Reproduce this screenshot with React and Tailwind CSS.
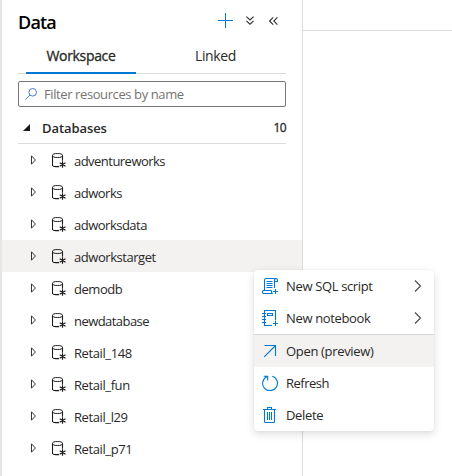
import React from "react";

const databases = [
  { name: "adventureworks", track: "tracking-[-0.53px]" },
  { name: "adworks", track: "tracking-[-0.5px]" },
  { name: "adworksdata", track: "tracking-[-0.5px]" },
  { name: "adworkstarget", track: "tracking-[-0.45px]", selected: true },
  { name: "demodb", track: "tracking-[-0.45px]" },
  { name: "newdatabase", track: "tracking-[-0.55px]" },
  { name: "Retail_148", track: "tracking-[-0.4px]" },
  { name: "Retail_fun", track: "tracking-[-0.4px]" },
  { name: "Retail_l29", track: "tracking-[-0.4px]" },
  { name: "Retail_p71", track: "tracking-[-0.4px]" },
];

function DatabaseIcon() {
  return (
    <svg className="h-4 w-4 shrink-0" viewBox="0 0 16 16" fill="none" stroke="#1b1a19">
      <path d="M.5 3.5c0-1.2 1.5-2 5-2s5 .8 5 2-1.5 2-5 2-5-.8-5-2z" />
      <path d="M.5 3.5v9.7c0 .9 1.3 1.4 3.2 1.4h3.3M10.5 3.5v5.2" strokeWidth="1.1" />
      <path d="M10.5 9.2v6.6M7.7 10.8l5.8 3.4M13.5 10.8l-5.8 3.4" strokeWidth="1.2" />
    </svg>
  );
}

function ScriptIcon() {
  return (
    <svg className="h-4 w-4" viewBox="0 0 16 16" fill="none" stroke="#0078d4" strokeWidth="1.1">
      <path d="M2.5 12.3V2.5c0-1.2.7-2 2-2h9c1.2 0 2 .8 2 2v1h-3M12.5 10V2.5c0-1.2.5-2 1.4-2M9.5 12.5h-8c-.7 0-1 .5-1 1.4 0 1 .5 1.6 1.4 1.6h8.6M9.5 12.5v1.3c0 1 .4 1.7 1.3 1.7" />
      <path d="M4.5 3.5h6M4.5 5.5h6M4.5 7.5h6M4.5 9.5h6M13.5 11v5M11 13.5h5" />
    </svg>
  );
}

function NotebookIcon() {
  return (
    <svg className="h-4 w-4" viewBox="0 0 16 16" fill="none" stroke="#0078d4" strokeWidth="1.1">
      <path d="M10 15.5H2.5V.5h11v10M5.5 3.5h5v2h-5zM0 3.5h4M0 6.5h4M0 9.5h4M0 12.5h4M13.5 11v5M11 13.5h5" />
    </svg>
  );
}

function OpenIcon() {
  return (
    <svg className="h-4 w-4" viewBox="0 0 16 16" fill="none" stroke="#0078d4" strokeWidth="1.1">
      <path d="M2.5 2.5h11V13M13.5 2.5L2.2 13.8" />
    </svg>
  );
}

function RefreshIcon() {
  return (
    <svg className="h-4 w-4" viewBox="0 0 16 16" fill="none" stroke="#0078d4" strokeWidth="1.1">
      <path d="M10.3 1.2A7.4 7.4 0 1 1 5 1.5M1.7 1.2h4v4.3" />
    </svg>
  );
}

function DeleteIcon() {
  return (
    <svg className="h-4 w-4" viewBox="0 0 16 16" fill="none" stroke="#0078d4" strokeWidth="1.1">
      <path d="M1 2.5h13M5.5 2.5v-2h4v2M2.5 2.5v12c0 .6.4 1 1 1h8c.6 0 1-.4 1-1v-12M5.5 5v8M7.5 5v8M9.5 5v8" />
    </svg>
  );
}

const menu = [
  { label: "New SQL script", Icon: ScriptIcon, sub: true, track: "tracking-[-0.35px]" },
  { label: "New notebook", Icon: NotebookIcon, sub: true, track: "tracking-[-0.35px]" },
  { label: "Open (preview)", Icon: OpenIcon, active: true, track: "tracking-[-0.33px]" },
  { label: "Refresh", Icon: RefreshIcon, track: "tracking-[-0.5px]" },
  { label: "Delete", Icon: DeleteIcon, track: "tracking-[-0.35px]" },
];

function ContextMenu() {
  return (
    <div className="absolute left-[254px] top-[270px] w-[180px] overflow-hidden rounded bg-white shadow-[0_3px_8px_rgba(0,0,0,0.14),0_0_2px_rgba(0,0,0,0.06)]">
      {menu.map(({ label, Icon, sub, active, track }) => (
        <div
          key={label}
          className={`flex items-center pl-2 pr-3 ${active ? "h-[33px] border-t border-[#d6d6d6] bg-[#f3f2f1]" : "h-8"}`}
        >
          <Icon />
          <span className={`ml-2 text-[13px] leading-4 ${track}`}>{label}</span>
          {sub && (
            <svg className="ml-auto h-3 w-2" viewBox="0 0 8 12" fill="none" stroke="#484644" strokeWidth="1.1">
              <path d="M1 .5L6.5 6 1 11.5" />
            </svg>
          )}
        </div>
      ))}
    </div>
  );
}

export default function App() {
  return (
    <div className="relative flex h-[476px] w-[452px] overflow-hidden bg-white font-['Open_Sans','Noto_Sans',sans-serif] text-[13px] leading-4 text-[#292827]">
      <aside className="w-[303px] shrink-0 border-l-2 border-r border-l-[#e6e6e6] border-r-[#dcdcdc]">
        <header className="flex h-[41px] items-center pl-4 pr-6">
          <h1 className="mt-0.5 text-[18px] font-semibold leading-6 tracking-[-0.8px] text-black">Data</h1>
          <div className="ml-auto flex items-center">
            <svg className="h-[15px] w-[15px]" viewBox="0 0 15 15" stroke="#0078d4">
              <path d="M7.5 0v15M0 7.5h15" />
            </svg>
            <svg className="ml-[13px] h-[9px] w-2" viewBox="0 0 8 9" fill="none" stroke="#323130" strokeWidth="1.1">
              <path d="M.4.6L4 4 7.6.6M.4 4.8L4 8.2l3.6-3.4" />
            </svg>
            <svg className="ml-[15px] h-2 w-[9px]" viewBox="0 0 9 8" fill="none" stroke="#323130" strokeWidth="1.1">
              <path d="M4.2.4L.6 4l3.6 3.6M8.4.4L4.8 4l3.6 3.6" />
            </svg>
          </div>
        </header>
        <div className="mx-4 flex h-[33px] border-b border-[#dcdcdc] pl-2">
          <div className="-mb-px flex w-[110px] justify-center border-b-2 border-[#0078d4] pt-[7px] text-[14px] tracking-[-0.33px] [-webkit-text-stroke:0.3px_#292827]">
            Workspace
          </div>
          <div className="ml-[59px] pt-[7px] text-[14px] tracking-[-0.4px]">Linked</div>
        </div>
        <div className="mx-4 mt-[7px] flex h-[26px] items-center rounded-[2px] border border-[#797775] pl-[6px]">
          <svg className="h-3 w-3" viewBox="0 0 12 12" fill="none" stroke="#4c7dcc">
            <circle cx="7.7" cy="4.3" r="3.8" />
            <path d="M5 7L.4 11.6" />
          </svg>
          <span className="ml-[7px] text-[13px] tracking-[-0.4px] text-[#757371]">Filter resources by name</span>
        </div>
        <div className="mx-4 flex h-[37px] items-center border-b border-[#dcdcdc] pt-[5px]">
          <svg className="ml-[5px] h-[7px] w-[7px]" viewBox="0 0 7 7" fill="#1b1a19">
            <path d="M7 0v7H0z" />
          </svg>
          <span className="ml-3 text-[13px] font-semibold tracking-[-0.08px]">Databases</span>
          <span className="ml-auto text-[12px] tracking-[-0.6px] [-webkit-text-stroke:0.3px_#292827]">10</span>
        </div>
        <ul>
          {databases.map(({ name, selected, track }) => (
            <li key={name} className={`flex h-8 items-center pl-[29px] ${selected ? "bg-[#f3f2f1]" : ""}`}>
              <svg className="h-[10px] w-[5px]" viewBox="0 0 5 10" fill="none" stroke="#323130">
                <path d="M.5.8v8.4L4.4 5z" />
              </svg>
              <span className="ml-4">
                <DatabaseIcon />
              </span>
              <span className={`ml-[6px] mt-0.5 ${track}`}>{name}</span>
            </li>
          ))}
        </ul>
      </aside>
      <main className="flex-1">
        <div className="h-[31px] border-b border-[#dcdcdc]" />
      </main>
      <ContextMenu />
    </div>
  );
}
